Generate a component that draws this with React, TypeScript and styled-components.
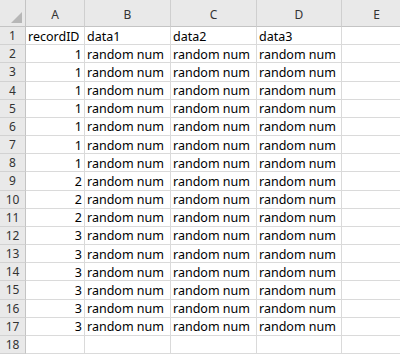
import React, { FC } from "react";
import styled, { createGlobalStyle } from "styled-components";

const GlobalStyle = createGlobalStyle`
  html, body {
    margin: 0;
    padding: 0;
    background: #ffffff;
  }
`;

const COLUMNS = ["A", "B", "C", "D", "E"];

const ROWS: string[][] = [
  ["recordID", "data1", "data2", "data3", ""],
  ...[1, 1, 1, 1, 1, 1, 1, 2, 2, 2, 3, 3, 3, 3, 3, 3].map((id) => [
    String(id),
    "random num",
    "random num",
    "random num",
    "",
  ]),
  ["", "", "", "", ""],
];

const App: FC = () => {
  return (
    <>
      <GlobalStyle />
      <ScSheet>
        <ScCorner>
          <ScCornerTriangle />
        </ScCorner>
        {COLUMNS.map((col) => (
          <ScColHeader key={col}>{col}</ScColHeader>
        ))}
        {ROWS.map((row, r) => (
          <React.Fragment key={r}>
            <ScRowHeader>{r + 1}</ScRowHeader>
            {row.map((value, c) => (
              <ScCell key={c} $numeric={/^\d+$/.test(value)}>
                {value}
              </ScCell>
            ))}
          </React.Fragment>
        ))}
      </ScSheet>
    </>
  );
};

export default App;

const ScSheet = styled.div`
  display: grid;
  grid-template-columns: 26px 59px 86px 86px 85px 70px;
  grid-template-rows: 27px repeat(18, 18.18px);
  width: 400px;
  height: 355px;
  overflow: hidden;
  background: #ffffff;
  font-family: "Noto Sans", "Open Sans", sans-serif;
  color: #000000;
`;

const ScHeaderBase = styled.div`
  box-sizing: border-box;
  display: flex;
  align-items: center;
  justify-content: center;
  background: #e9e9e9;
  color: #333333;
  font-size: 12px;
  border-right: 1px solid #cfcfcf;
  border-bottom: 1px solid #c4c4c4;
`;

const ScCorner = styled(ScHeaderBase)`
  position: relative;
  border-right-color: #c4c4c4;
`;

const ScCornerTriangle = styled.div`
  position: absolute;
  right: 3px;
  bottom: 3px;
  width: 11px;
  height: 11px;
  background: #b7b7b7;
  clip-path: polygon(100% 0, 100% 100%, 0 100%);
`;

const ScColHeader = styled(ScHeaderBase)`
  padding-top: 2px;
`;

const ScRowHeader = styled(ScHeaderBase)`
  border-right-color: #c4c4c4;
  border-bottom-color: #d2d2d2;
`;

const ScCell = styled.div<{ $numeric: boolean }>`
  box-sizing: border-box;
  display: flex;
  align-items: center;
  justify-content: ${({ $numeric }) => ($numeric ? "flex-end" : "flex-start")};
  padding: 1px 2px 0 2px;
  font-size: 12.5px;
  white-space: nowrap;
  overflow: hidden;
  border-right: 1px solid #dadada;
  border-bottom: 1px solid #dadada;
`;
